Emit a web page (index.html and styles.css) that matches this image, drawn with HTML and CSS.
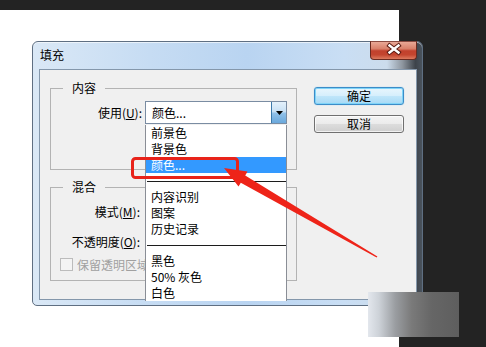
FILE: index.html
```html
<!DOCTYPE html>
<html lang="zh-CN">
<head>
<meta charset="utf-8">
<title>填充</title>
<link rel="stylesheet" href="styles.css">
</head>
<body>
<div class="screen">
  <div class="canvas">
    <div class="dialog">
      <div class="titlebar">
        <span class="title">填充</span>
        <button class="close" aria-label="关闭">
          <svg width="47" height="19" viewBox="0 0 47 19">
            <path d="M19.5 4.5 L28.5 11.5 M28.5 4.5 L19.5 11.5" stroke="#5b1b12" stroke-width="4.4" stroke-linecap="square" fill="none"/>
            <path d="M19.5 4.5 L28.5 11.5 M28.5 4.5 L19.5 11.5" stroke="#ffffff" stroke-width="2.4" stroke-linecap="square" fill="none"/>
          </svg>
        </button>
      </div>
      <div class="client">
        <div class="groups">
          <div class="group g-content">
            <span class="group-title">内容</span>
            <div class="row row-use">
              <span class="lbl">使用(<u>U</u>):</span>
              <div class="combo">
                <span class="combo-text">颜色...</span>
                <span class="combo-btn"><svg width="7" height="4" viewBox="0 0 7 4"><path d="M0 0 H7 L3.5 4 Z" fill="#000"/></svg></span>
              </div>
            </div>
          </div>
          <div class="group g-blend">
            <span class="group-title">混合</span>
            <div class="row row-mode">
              <span class="lbl lbl-b">模式(<u>M</u>):</span>
              <div class="combo"></div>
            </div>
            <div class="row row-opacity">
              <span class="lbl lbl-b">不透明度(<u>O</u>):</span>
              <div class="field"></div>
            </div>
            <div class="check-row">
              <span class="checkbox"></span>
              <span class="check-text">保留透明区域</span>
            </div>
          </div>
        </div>
        <div class="buttons">
          <button class="btn btn-default">确定</button>
          <button class="btn">取消</button>
        </div>
        <ul class="dropdown">
          <li>前景色</li>
          <li>背景色</li>
          <li class="sel">颜色...</li>
          <li class="sep"></li>
          <li>内容识别</li>
          <li>图案</li>
          <li>历史记录</li>
          <li class="sep"></li>
          <li>黑色</li>
          <li>50% 灰色</li>
          <li>白色</li>
        </ul>
      </div>
    </div>
  </div>
  <svg class="annotation" width="486" height="347" viewBox="0 0 486 347">
    <rect x="132.5" y="158.5" width="105" height="19" rx="3" ry="3" fill="none" stroke="#e8231a" stroke-width="3"/>
    <polygon points="224,168 247.5,171.6 245.2,175.4 377.4,256.6 376.6,257.4 240.8,182.8 238.5,186.6" fill="#ee2419"/>
  </svg>
  <div class="blur"></div>
</div>
</body>
</html>
```
FILE: styles.css
```css
* { box-sizing: border-box; }

body {
  margin: 0;
  background: #232323;
  font-family: "Noto Sans CJK SC", "Noto Sans", sans-serif;
  font-size: 12px;
  color: #000;
}

.screen {
  position: relative;
  width: 486px;
  height: 347px;
  overflow: hidden;
  background: #232323;
}

.canvas {
  margin-top: 10px;
  width: 399px;
  height: 337px;
  background: #ffffff;
  padding: 31px 0 0 32px;
}

.dialog {
  width: 391px;
  height: 265px;
  border: 1px solid #5f6f82;
  border-radius: 6px 6px 5px 5px;
  padding: 0 5px 5px 6px;
  display: flex;
  flex-direction: column;
  background:
    linear-gradient(to right,
      #dae8f6 0%, #c6dcf3 30%, #b9d4f1 55%, #c9def4 80%,
      #ccdcec 91%, #8d959e 95%, #3d434a 98.3%, #4a535d 100%);
  box-shadow: inset 0 1px 0 rgba(255,255,255,0.6);
}

.titlebar {
  height: 27px;
  display: flex;
  justify-content: space-between;
  align-items: flex-start;
}

.title {
  margin-top: 5px;
  padding-left: 1px;
  line-height: 16px;
}

.close {
  margin-top: -1px;
  width: 47px;
  height: 19px;
  padding: 0;
  border: 1px solid #6a2a20;
  border-top-color: #8a4a40;
  border-radius: 0 0 4px 4px;
  background: linear-gradient(#e9a896 0%, #d9806a 40%, #c2412d 52%, #c4452f 75%, #dc7a5e 100%);
  display: block;
  position: relative;
}

.close svg {
  position: absolute;
  left: -1px;
  top: -1px;
}

.client {
  position: relative;
  height: 231px;
  border: 1px solid #8497ab;
  background: #f0f0f0;
  display: flex;
  align-items: flex-start;
  padding: 18px 0 0 10px;
}

.groups {
  width: 247px;
  display: flex;
  flex-direction: column;
  gap: 17px;
}

.group {
  position: relative;
  border: 1px solid #b3b3b3;
}

.g-content { height: 82px; }
.g-blend { height: 94px; }

.group-title {
  position: absolute;
  top: -9px;
  left: 12px;
  padding: 0 9px;
  line-height: 16px;
  background: #f0f0f0;
}

.row {
  display: flex;
  align-items: center;
  height: 23px;
}

.row-use { margin-top: 12px; }
.row-mode { margin-top: 12px; }
.row-opacity { margin-top: 7px; }

.lbl {
  width: 91px;
  margin-right: 3px;
  text-align: right;
  white-space: nowrap;
}

.lbl-b {
  width: 89px;
  margin-right: 5px;
}

.combo {
  width: 142px;
  height: 23px;
  border: 1px solid #7a8ca2;
  background: #fff;
  display: flex;
  align-items: center;
}

.combo-text {
  flex: 1;
  padding-left: 6px;
  line-height: 16px;
}

.combo-btn {
  align-self: stretch;
  width: 15px;
  border-left: 1px solid #3c7aab;
  background: linear-gradient(#e4f1fb 0%, #c9e1f5 45%, #8fc0e8 55%, #6aa8dc 100%);
  display: flex;
  align-items: center;
  justify-content: center;
}

.field {
  width: 60px;
  height: 21px;
  border: 1px solid #abadb3;
  background: #fff;
}

.check-row {
  margin-top: 5px;
  margin-left: 9px;
  height: 13px;
  display: flex;
  align-items: center;
  gap: 4px;
  color: #a0a0a0;
}

.checkbox {
  width: 13px;
  height: 13px;
  border: 1px solid #bcbcbc;
  background: #f4f4f4;
}

.check-text {
  width: 68px;
  overflow: hidden;
  line-height: 16px;
  white-space: nowrap;
}

.buttons {
  margin-left: 17px;
  margin-top: -1px;
  display: flex;
  flex-direction: column;
  gap: 10px;
}

.btn {
  width: 90px;
  height: 18px;
  padding: 0;
  font: inherit;
  line-height: 16px;
  color: #000;
  border: 1px solid #707070;
  border-radius: 3px;
  background: linear-gradient(#f4f4f4 0%, #ebebeb 48%, #dcdcdc 52%, #cfcfcf 100%);
  box-shadow: inset 0 0 0 1px rgba(255,255,255,0.7);
}

.btn-default {
  border-color: #3c8cc8;
  background: linear-gradient(#e8f6fd 0%, #d6effc 48%, #bfe6fa 52%, #a7d9f5 100%);
  box-shadow: inset 0 0 0 1px #7fd4f8, 0 0 1px #6bc3ef;
}

.dropdown {
  position: absolute;
  left: 105px;
  top: 55px;
  width: 142px;
  margin: 0;
  padding: 0;
  list-style: none;
  background: #fff;
  border: 1px solid #8a8e96;
  border-top: 0;
  border-bottom: 0;
}

.dropdown li {
  height: 16px;
  line-height: 16px;
  padding-left: 5px;
  white-space: nowrap;
}

.dropdown li.sel {
  background: #3399ff;
  color: #fff;
}

.dropdown li.sep {
  background: linear-gradient(#1c1c1c, #1c1c1c) no-repeat 1px 8px / 100% 1px;
}

.annotation {
  position: absolute;
  left: 0;
  top: 0;
  pointer-events: none;
}

.blur {
  position: absolute;
  left: 368px;
  top: 292px;
  width: 91px;
  height: 45px;
  background: linear-gradient(to right, #e3e7ed 0%, #cdd2d8 12%, #9a9da1 30%, #7a7a7a 48%, #666 70%, #5e5e5e 100%);
}
```
